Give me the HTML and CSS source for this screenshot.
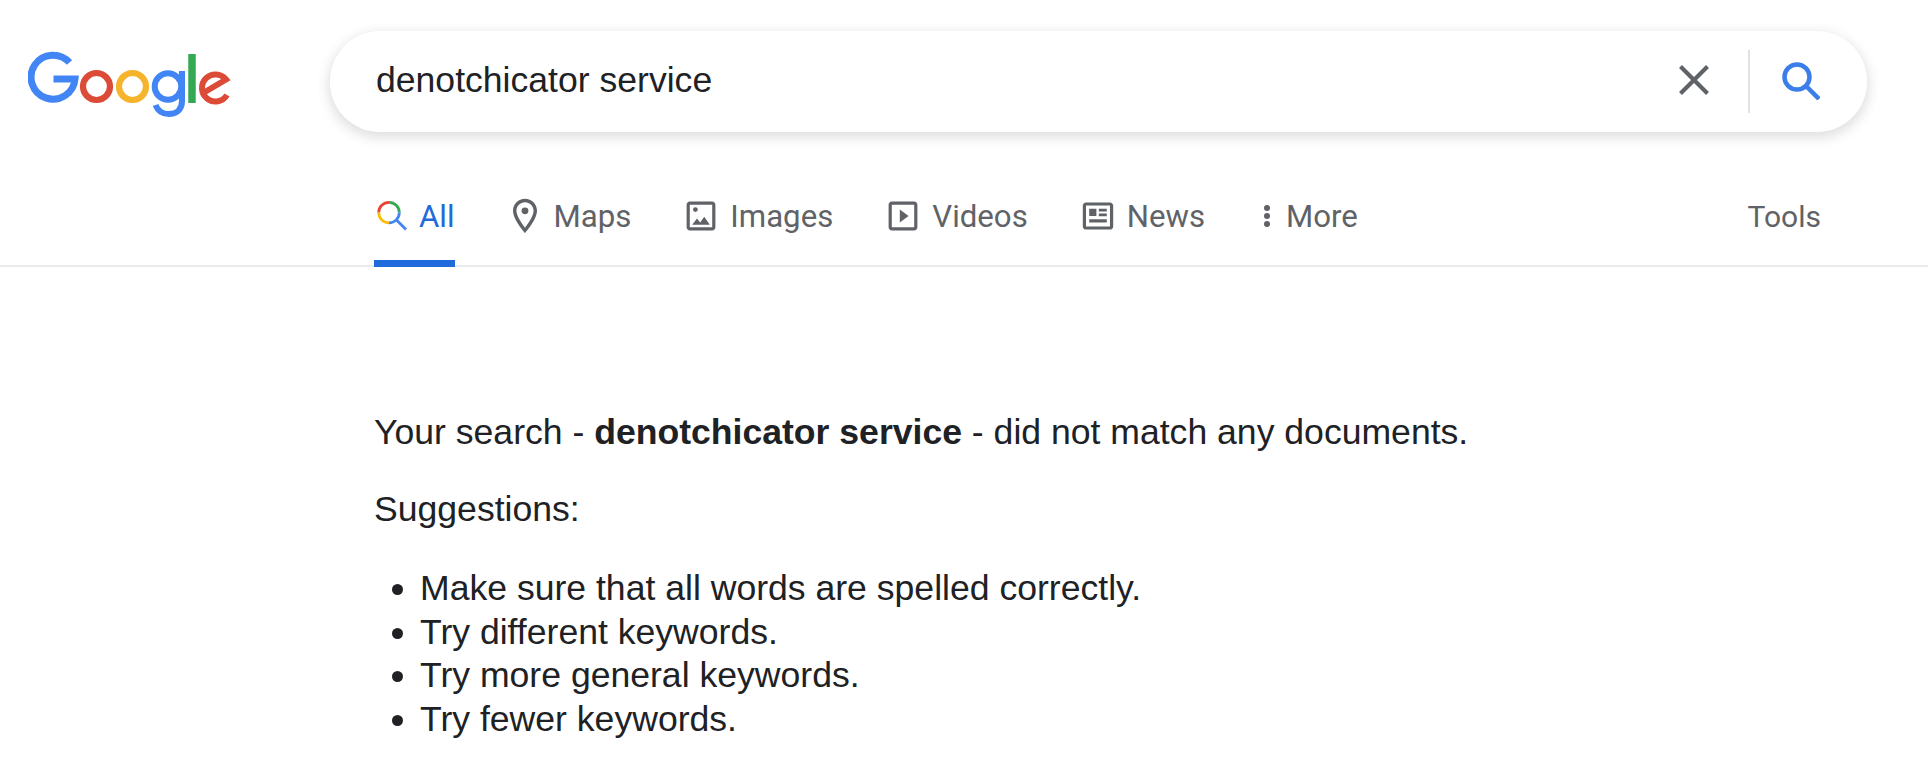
FILE: index.html
```html
<!DOCTYPE html>
<html lang="en">
<head>
<meta charset="UTF-8">
<title>denotchicator service - Google Search</title>
<link rel="stylesheet" href="styles.css">
</head>
<body>
  <div class="header">
    <a href="#" class="logo" aria-label="Google">
      <svg width="206" height="71" viewBox="28 46 206 71" fill="none" stroke-width="7">
        <path d="M69.500 62.500A22 22 0 1 0 75 79H53.500" stroke="#4285f4"/>
        <circle cx="96.500" cy="86.500" r="13.500" stroke="#dc4b37" stroke-width="6.200"/>
        <circle cx="132.500" cy="86.500" r="13.500" stroke="#f6b42c" stroke-width="6.200"/>
        <circle cx="168" cy="86.500" r="13.300" stroke="#4285f4" stroke-width="6"/>
        <path d="M182 71V101C182 109.500 176.500 114 168.500 114C162 114 157.500 110 155.500 105" stroke="#4285f4" stroke-width="6"/>
        <path d="M192 54V103" stroke="#34a853" stroke-width="7.500"/>
        <path d="M227 95A13.500 13.500 0 1 1 226 79.500L204 92.500" stroke="#dc4b37" stroke-width="6"/>
      </svg>
    </a>
    <div class="search-box">
      <span class="search-text">denotchicator service</span>
      <svg class="clear-icon" width="30" height="30" viewBox="0 0 30 30" fill="none" stroke="#5f6368" stroke-width="4.200">
        <path d="M1.500 1.500L28.500 28.500M28.500 1.500L1.500 28.500"/>
      </svg>
      <div class="search-divider"></div>
      <svg class="search-icon" width="38" height="38" viewBox="0 0 38 38" fill="none" stroke="#3b7eea" stroke-width="4.500">
        <circle cx="15" cy="15" r="12.500"/>
        <path d="M24 24L37 37"/>
      </svg>
    </div>
  </div>

  <div class="tabs">
    <a href="#" class="tab active">
      <svg class="tab-icon" viewBox="0 0 36 36" fill="none" stroke-width="2.800">
        <path d="M4.700 14.600A10.300 10.300 0 0 1 15 4.300" stroke="#ea4335"/>
        <path d="M15 4.300A10.300 10.300 0 0 1 25.300 14.600" stroke="#34a853"/>
        <path d="M4.700 14.600A10.300 10.300 0 0 0 15 24.900" stroke="#fbbc05"/>
        <path d="M25.300 14.600A10.300 10.300 0 0 1 15 24.900M22.500 22L32 31.500" stroke="#4285f4"/>
      </svg>
      All
    </a>
    <a href="#" class="tab">
      <svg class="tab-icon" viewBox="1.500 1.500 21 21" fill="#5f6368">
        <path d="M12 2C8.130 2 5 5.130 5 9c0 5.250 7 13 7 13s7-7.750 7-13c0-3.870-3.130-7-7-7zM7 9c0-2.760 2.240-5 5-5s5 2.240 5 5c0 2.880-2.880 7.190-5 9.880C9.920 16.210 7 11.850 7 9z"/>
        <circle cx="12" cy="9" r="2"/>
      </svg>
      Maps
    </a>
    <a href="#" class="tab">
      <svg class="tab-icon" viewBox="0.750 0.750 22.500 22.500" fill="#5f6368">
        <path d="M19 5v14H5V5h14m0-2H5c-1.100 0-2 .9-2 2v14c0 1.100.9 2 2 2h14c1.100 0 2-.9 2-2V5c0-1.100-.9-2-2-2z"/>
        <circle cx="8.500" cy="8" r="1.500"/>
        <path d="M6.500 17.500l3-4 2 2.500 2.500-3.500 3.500 5z"/>
      </svg>
      Images
    </a>
    <a href="#" class="tab">
      <svg class="tab-icon" viewBox="0.750 0.750 22.500 22.500" fill="#5f6368">
        <path d="M19 5v14H5V5h14m0-2H5c-1.100 0-2 .9-2 2v14c0 1.100.9 2 2 2h14c1.100 0 2-.9 2-2V5c0-1.100-.9-2-2-2z"/>
        <path d="M10 8l5.500 4-5.500 4z"/>
      </svg>
      Videos
    </a>
    <a href="#" class="tab">
      <svg class="tab-icon" viewBox="0.750 0.750 22.500 22.500" fill="#5f6368">
        <path d="M19.500 5.500v13h-15v-13h15m0-2h-15c-1.100 0-2 .9-2 2v13c0 1.100.9 2 2 2h15c1.100 0 2-.9 2-2v-13c0-1.100-.9-2-2-2z"/>
        <path d="M6.500 7.500h4.500v4.500H6.500zM12.500 7.500h5v1.700h-5zM12.500 10.400h5v1.700h-5zM6.500 14h11v2H6.500z"/>
      </svg>
      News
    </a>
    <a href="#" class="tab tab-more">
      <svg class="tab-icon-small" viewBox="0 0 20 36" fill="#5f6368">
        <circle cx="10" cy="10" r="3"/>
        <circle cx="10" cy="18" r="3"/>
        <circle cx="10" cy="26" r="3"/>
      </svg>
      More
    </a>
    <a href="#" class="tab tab-tools">Tools</a>
  </div>

  <div class="results">
    <p>Your search - <b>denotchicator service</b> - did not match any documents.</p>
    <p class="suggestions">Suggestions:</p>
    <ul>
      <li>Make sure that all words are spelled correctly.</li>
      <li>Try different keywords.</li>
      <li>Try more general keywords.</li>
      <li>Try fewer keywords.</li>
    </ul>
  </div>
</body>
</html>
```

FILE: styles.css
```css
body {
  font-family: "Liberation Sans", Arial, sans-serif;
  background: #fff;
  color: #202124;
  margin: 0;
  padding: 0;
}
.header {
  display: flex;
  align-items: center;
  padding: 31px 61px 0 28px;
}
.logo {
  display: block;
  width: 302px;
  height: 71px;
  flex: none;
}
.search-box {
  flex: 1;
  display: flex;
  align-items: center;
  height: 101px;
  padding: 0 47px 0 46px;
  background: #fff;
  border-radius: 50px;
  box-shadow: 0 4px 12px 2px rgba(64, 60, 67, 0.16);
}
.search-text {
  flex: 1;
  font-size: 35.6px;
  margin-top: -3px;
}
.clear-icon {
  margin-top: -3px;
  margin-right: -1px;
}
.search-divider {
  width: 2px;
  height: 63px;
  margin: 0 32px 0 40px;
  background: #dfe1e5;
}
.search-icon {
  margin-top: -1px;
}
.tabs {
  display: flex;
  height: 133px;
  padding: 0 107px 0 374px;
  gap: 52px;
  border-bottom: 2px solid #ebebeb;
}
.tab {
  display: flex;
  align-items: center;
  gap: 11px;
  height: 135px;
  padding-top: 33px;
  box-sizing: border-box;
  font-family: Roboto, Arial, sans-serif;
  font-size: 31.2px;
  color: #5f6368;
  text-decoration: none;
}
.tab.active {
  color: #1f6bdb;
  border-bottom: 7px solid #1f6bdb;
  gap: 9px;
  padding-top: 40px;
}
.tab-icon {
  width: 36px;
  height: 36px;
}
.tab-icon-small {
  width: 20px;
  height: 36px;
  margin-right: -2px;
}
.tab-tools {
  margin-left: auto;
  font-size: 30px;
}
.results {
  padding: 143.5px 0 0 374px;
  font-size: 35.6px;
  line-height: 43.6px;
}
.results p {
  margin: 0 0 33.5px;
}
.results .suggestions {
  margin-bottom: 36px;
}
.results ul {
  margin: 0;
  padding-left: 46px;
}
```
